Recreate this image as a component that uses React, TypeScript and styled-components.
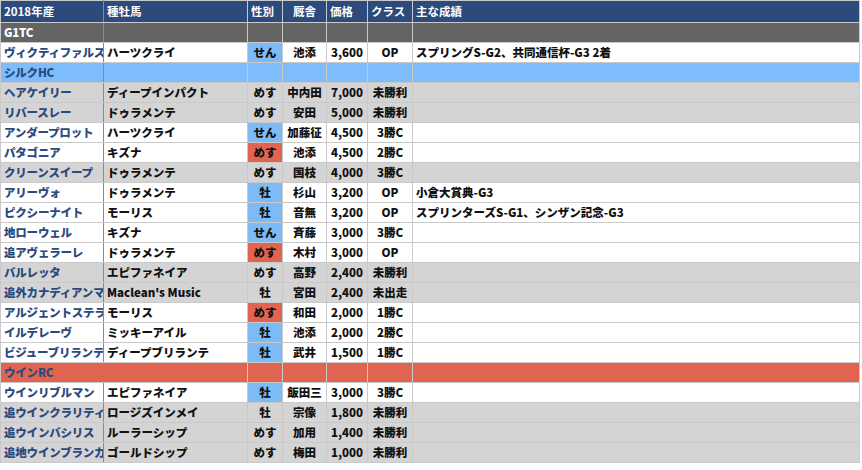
import React from "react";
import styled, { createGlobalStyle } from "styled-components";

const Global = createGlobalStyle`
  html, body { margin: 0; padding: 0; background: #fff; }
  body { font-family: "Noto Sans CJK JP", "Noto Sans", sans-serif; }
  * { box-sizing: border-box; }
`;

const Table = styled.table`
  width: 860px;
  border-collapse: collapse;
  table-layout: fixed;
  font-size: 11.5px;
  font-weight: 900;
  color: #111;
  margin-bottom: 4px;
`;

const Th = styled.th<{ $w?: number; $left?: boolean; $center?: boolean }>`
  width: ${(p) => (p.$w ? `${p.$w}px` : "auto")};
  background: #2c4a7c;
  color: #fff;
  height: 22px;
  padding: 0 3px;
  text-align: ${(p) => (p.$center ? "center" : "left")};
  border: 1px solid #c9c9c9;
  border-right-color: ${(p) => (p.$left ? "#8a8a8a" : "#c9c9c9")};
  white-space: nowrap;
  line-height: 1;
`;

type Kind = "white" | "gray";
const Tr = styled.tr<{ $bg: string }>`
  background: ${(p) => p.$bg};
  height: 20px;
`;

const Td = styled.td<{ $align?: string; $hl?: string; $name?: boolean; $color?: string }>`
  padding: 0 3px;
  border: 1px solid #c9c9c9;
  border-right-color: ${(p) => (p.$name ? "#8a8a8a" : "#c9c9c9")};
  text-align: ${(p) => p.$align || "left"};
  background: ${(p) => p.$hl || "transparent"};
  color: ${(p) => p.$color || (p.$name ? "#2b4a7e" : "#111")};
  white-space: nowrap;
  overflow: hidden;
  line-height: 1;
  letter-spacing: ${(p) => (p.$name ? "-0.2px" : "0")};
`;

const BLUE = "#7dbbf7";
const RED = "#e0644f";

type Horse = [string, string, string, string, string, string, string, Kind, string?];
const g1tc: Horse[] = [["ヴィクティファルス", "ハーツクライ", "せん", "池添", "3,600", "OP", "スプリングS-G2、共同通信杯-G3 2着", "white", BLUE]];
const silk: Horse[] = [
  ["ヘアケイリー", "ディープインパクト", "めす", "中内田", "7,000", "未勝利", "", "gray"],
  ["リバースレー", "ドゥラメンテ", "めす", "安田", "5,000", "未勝利", "", "gray"],
  ["アンダープロット", "ハーツクライ", "せん", "加藤征", "4,500", "3勝C", "", "white", BLUE],
  ["パタゴニア", "キズナ", "めす", "池添", "4,500", "2勝C", "", "white", RED],
  ["クリーンスイープ", "ドゥラメンテ", "めす", "国枝", "4,000", "3勝C", "", "gray"],
  ["アリーヴォ", "ドゥラメンテ", "牡", "杉山", "3,200", "OP", "小倉大賞典-G3", "white", BLUE],
  ["ピクシーナイト", "モーリス", "牡", "音無", "3,200", "OP", "スプリンターズS-G1、シンザン記念-G3", "white", BLUE],
  ["地ローウェル", "キズナ", "せん", "斉藤", "3,000", "3勝C", "", "white", BLUE],
  ["追アヴェラーレ", "ドゥラメンテ", "めす", "木村", "3,000", "OP", "", "white", RED],
  ["バルレッタ", "エピファネイア", "めす", "高野", "2,400", "未勝利", "", "gray"],
  ["追外カナディアンマン", "Maclean's Music", "牡", "宮田", "2,400", "未出走", "", "gray"],
  ["アルジェントステラ", "モーリス", "めす", "和田", "2,000", "1勝C", "", "white", RED],
  ["イルデレーヴ", "ミッキーアイル", "牡", "池添", "2,000", "2勝C", "", "white", BLUE],
  ["ビジューブリランテ", "ディープブリランテ", "牡", "武井", "1,500", "1勝C", "", "white", BLUE],
];
const win: Horse[] = [
  ["ウインリブルマン", "エピファネイア", "牡", "飯田三", "3,000", "3勝C", "", "white", BLUE],
  ["追ウインクラリティ", "ロージズインメイ", "牡", "宗像", "1,800", "未勝利", "", "gray"],
  ["追ウインバシリス", "ルーラーシップ", "めす", "加用", "1,400", "未勝利", "", "gray"],
  ["追地ウインブランカ", "ゴールドシップ", "めす", "梅田", "1,000", "未勝利", "", "gray"],
];

const Section = ({ label, bg, color }: { label: string; bg: string; color: string }) => (
  <Tr $bg={bg}>
    <Td $name $color={color}>{label}</Td>
    <Td /><Td /><Td /><Td /><Td /><Td />
  </Tr>
);

const Row = ({ h }: { h: Horse }) => (
  <Tr $bg={h[7] === "white" ? "#ffffff" : "#d4d4d4"}>
    <Td $name>{h[0]}</Td>
    <Td>{h[1]}</Td>
    <Td $align="center" $hl={h[8]}>{h[2]}</Td>
    <Td $align="center">{h[3]}</Td>
    <Td $align="center">{h[4]}</Td>
    <Td $align="center">{h[5]}</Td>
    <Td>{h[6]}</Td>
  </Tr>
);

export default function App() {
  return (
    <>
      <Global />
      <Table>
        <thead>
          <tr>
            <Th $w={103} $left>2018年産</Th>
            <Th $w={144}>種牡馬</Th>
            <Th $w={35}>性別</Th>
            <Th $w={44} $center>厩舎</Th>
            <Th $w={41}>価格</Th>
            <Th $w={45}>クラス</Th>
            <Th>主な成績</Th>
          </tr>
        </thead>
        <tbody>
          <Section label="G1TC" bg="#646464" color="#ffffff" />
          {g1tc.map((h) => <Row key={h[0]} h={h} />)}
          <Section label="シルクHC" bg="#7dbdfb" color="#2b4a7e" />
          {silk.map((h) => <Row key={h[0]} h={h} />)}
          <Section label="ウインRC" bg="#e0644f" color="#2b4a7e" />
          {win.map((h) => <Row key={h[0]} h={h} />)}
        </tbody>
      </Table>
    </>
  );
}
